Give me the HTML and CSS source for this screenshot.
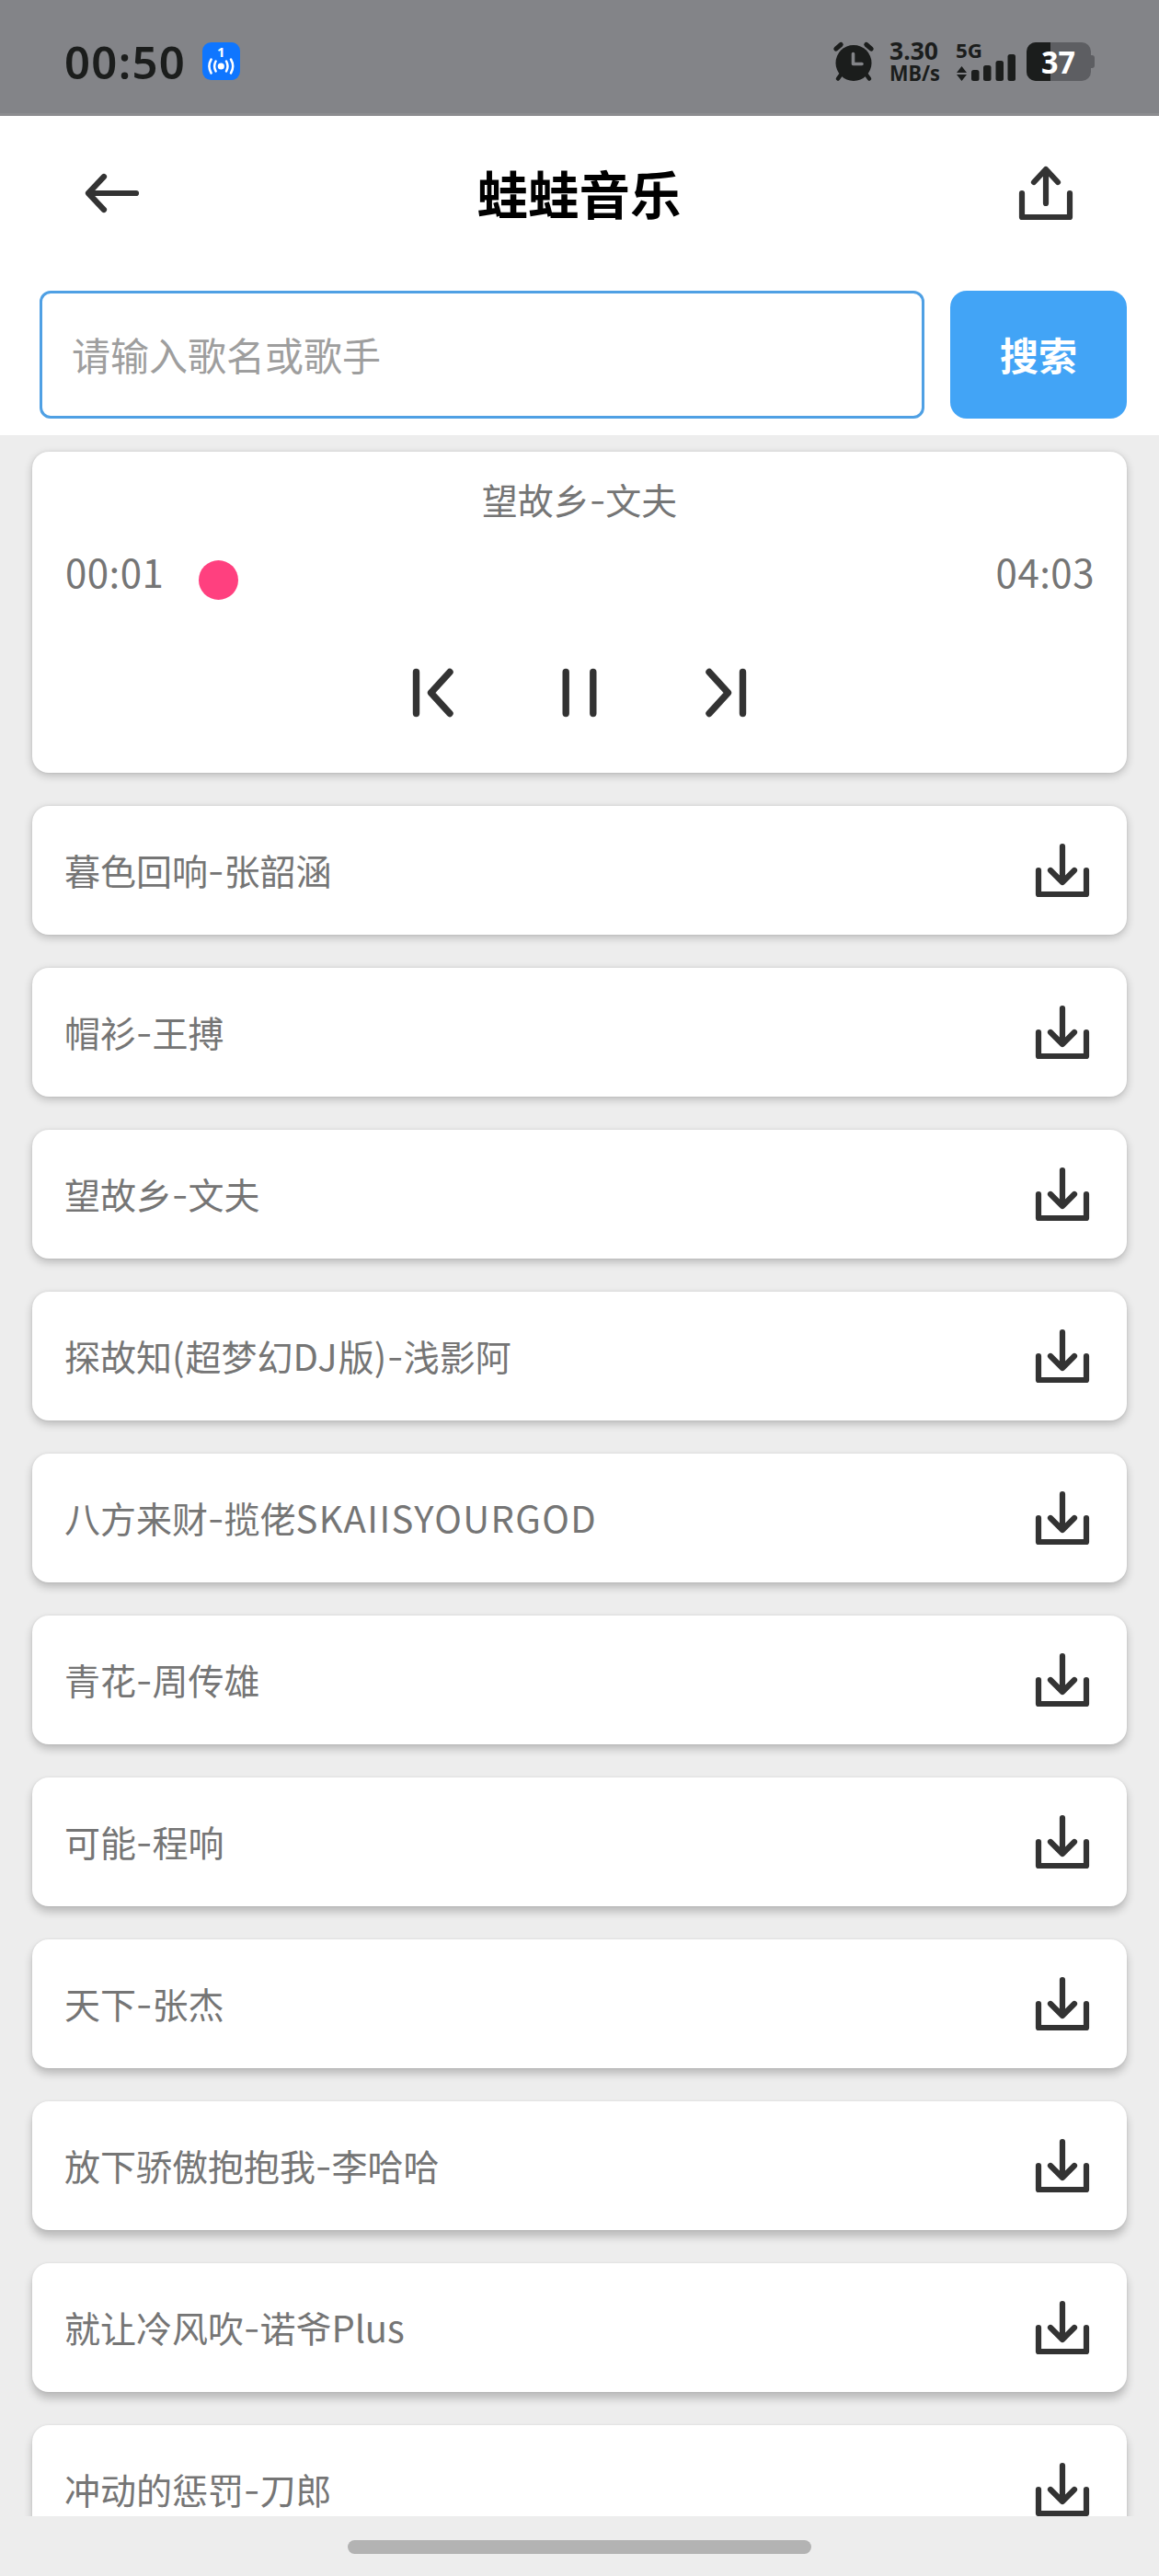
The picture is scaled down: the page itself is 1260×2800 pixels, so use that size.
FILE: index.html
```html
<!DOCTYPE html>
<html lang="zh-CN">
<head>
<meta charset="utf-8">
<title>蛙蛙音乐</title>
<link rel="stylesheet" href="styles.css">
</head>
<body>
<svg width="0" height="0" class="defs">
  <symbol id="download" viewBox="0 0 64 64">
    <path d="M32 6V44M19 32L32 45L45 32M6 32V58H58V32"/>
  </symbol>
</svg>
<div class="screen">
  <div class="status">
    <span class="clock">00:50</span>
    <svg class="hotspot" width="41" height="41" viewBox="0 0 41 41">
      <rect width="41" height="41" rx="9.5" fill="#0f76ff"/>
      <text x="20.3" y="16" text-anchor="middle" class="hotspot-num">1</text>
      <circle cx="20.3" cy="26" r="3.6" fill="#fff"/>
      <path d="M14.6 20.5Q11.6 26 14.6 31.5M9.6 18.5Q5.2 26 9.6 33.5M26 20.5Q29 26 26 31.5M31 18.5Q35.4 26 31 33.5" fill="none" stroke="#fff" stroke-width="2.5" stroke-linecap="round"/>
    </svg>
    <div class="status-right">
      <svg width="44" height="42" viewBox="0 0 44 42">
        <g stroke="#1b1d1c" stroke-width="5" stroke-linecap="round"><path d="M2.8 7.2L8.2 2.5M41.2 7.2L35.8 2.5"/><path d="M9 34L5 39.5M35 34L39 39.5" stroke-width="4.5"/></g>
        <circle cx="22" cy="22.4" r="19.5" fill="#1b1d1c"/>
        <path d="M21.5 12.5V23.5H31" fill="none" stroke="#838488" stroke-width="3.6" stroke-linecap="round" stroke-linejoin="round"/>
      </svg>
      <svg class="speed" width="56" height="46" viewBox="0 0 56 46">
        <text x="0" y="19" textLength="53" lengthAdjust="spacingAndGlyphs">3.30</text>
        <text x="0" y="42" font-size="22.5" textLength="55" lengthAdjust="spacingAndGlyphs">MB/s</text>
      </svg>
      <svg class="signal" width="65" height="42" viewBox="0 0 65 42">
        <text x="-1" y="16.500" textLength="29" lengthAdjust="spacingAndGlyphs">5G</text>
        <path d="M0 33H11L5.5 26ZM0 35H11L5.5 42Z"/>
        <rect x="16" y="30" width="8.5" height="12" rx="2.5"/>
        <rect x="29" y="25" width="8.5" height="17" rx="2.5"/>
        <rect x="42.5" y="20" width="8.5" height="22" rx="2.5"/>
        <rect x="55.5" y="13" width="8.5" height="29" rx="2.5"/>
      </svg>
      <svg class="battery" width="74" height="42" viewBox="0 0 74 42">
        <rect x="66" y="14" width="8" height="14" rx="3" fill="#5d5e62"/>
        <rect width="70" height="42" rx="10" fill="#5d5e62"/>
        <path d="M26 0H10A10 10 0 0 0 0 10V32A10 10 0 0 0 10 42H26Z" fill="#1b1d1c"/>
        <text x="16" y="33.5" textLength="37" lengthAdjust="spacingAndGlyphs">37</text>
      </svg>
    </div>
  </div>
  <header class="top">
    <div class="title-bar">
      <svg class="line" width="64" height="64" viewBox="0 0 64 64"><path d="M58 32H7M23 14L6 32L23 50"/></svg>
      <h1>蛙蛙音乐</h1>
      <svg class="line" width="64" height="64" viewBox="0 0 64 64"><path d="M32 43V7M19 20L32 6L45 20M6 32V58H58V32"/></svg>
    </div>
    <div class="search">
      <input class="field" type="text" placeholder="请输入歌名或歌手">
      <button class="go" type="button">搜索</button>
    </div>
  </header>
  <main class="list">
    <section class="card player">
      <div class="now">望故乡<i>-</i>文夫</div>
      <div class="progress"><span class="time">00:01</span><span class="thumb"></span><span class="time total">04:03</span></div>
      <div class="controls">
        <svg class="line" width="64" height="64" viewBox="0 0 64 64"><path d="M13.5 9.5V54.5M50 9.5L29.5 32L50 54.5"/></svg>
        <svg class="line" width="64" height="64" viewBox="0 0 64 64"><path d="M17.2 9.5V54.5M46.8 9.5V54.5"/></svg>
        <svg class="line" width="64" height="64" viewBox="0 0 64 64"><path d="M50.5 9.5V54.5M14 9.5L34.5 32L14 54.5"/></svg>
      </div>
    </section>
    <div class="card song"><span>暮色回响<i>-</i>张韶涵</span><svg class="line" width="64" height="64"><use href="#download"/></svg></div>
    <div class="card song"><span>帽衫<i>-</i>王搏</span><svg class="line" width="64" height="64"><use href="#download"/></svg></div>
    <div class="card song"><span>望故乡<i>-</i>文夫</span><svg class="line" width="64" height="64"><use href="#download"/></svg></div>
    <div class="card song"><span>探故知<b>(</b>超梦幻<b>DJ</b>版<b>)</b><i>-</i>浅影阿</span><svg class="line" width="64" height="64"><use href="#download"/></svg></div>
    <div class="card song"><span>八方来财<i>-</i>揽佬<b class="caps">SKAIISYOURGOD</b></span><svg class="line" width="64" height="64"><use href="#download"/></svg></div>
    <div class="card song"><span>青花<i>-</i>周传雄</span><svg class="line" width="64" height="64"><use href="#download"/></svg></div>
    <div class="card song"><span>可能<i>-</i>程响</span><svg class="line" width="64" height="64"><use href="#download"/></svg></div>
    <div class="card song"><span>天下<i>-</i>张杰</span><svg class="line" width="64" height="64"><use href="#download"/></svg></div>
    <div class="card song"><span>放下骄傲抱抱我<i>-</i>李哈哈</span><svg class="line" width="64" height="64"><use href="#download"/></svg></div>
    <div class="card song"><span>就让冷风吹<i>-</i>诺爷<b class="mixed">Plus</b></span><svg class="line" width="64" height="64"><use href="#download"/></svg></div>
    <div class="card song"><span>冲动的惩罚<i>-</i>刀郎</span><svg class="line" width="64" height="64"><use href="#download"/></svg></div>
  </main>
  <footer class="nav"><div class="handle"></div></footer>
</div>
</body>
</html>
```
FILE: styles.css
```css
* { box-sizing: border-box; }
body { margin: 0; background: #ededed; font-family: "Noto Sans CJK SC", "Noto Sans", sans-serif; }
.defs { display: none; }
.screen { width: 1260px; height: 2800px; display: flex; flex-direction: column; overflow: hidden; }
svg { display: block; flex: none; overflow: visible; }
.line { fill: none; stroke: #333; stroke-width: 6.2; stroke-linecap: round; stroke-linejoin: round; }

.status { height: 126px; flex: none; display: flex; align-items: flex-start; padding: 46px 70px 0; background: #838488; border-bottom: 3px solid #8c8c8f; color: #1b1d1c; font-family: "Noto Sans", sans-serif; }
.clock { width: 150px; height: 41px; line-height: 42px; font-size: 49px; font-weight: 600; letter-spacing: 1.3px; }
.hotspot-num { font: 700 15px "Noto Sans", sans-serif; fill: #fff; }
.status-right { margin-left: auto; display: flex; }
.speed { margin-left: 17px; font-size: 26px; font-weight: 700; fill: #1b1d1c; }
.signal { margin-left: 17px; font-size: 22px; font-weight: 700; fill: #1b1d1c; }
.battery { margin-left: 11px; font-size: 34px; font-weight: 700; fill: #fff; }

.top { height: 347px; flex: none; background: #fff; padding: 52px 35px 18px 43px; }
.title-bar { display: flex; align-items: center; justify-content: space-between; height: 64px; padding: 0 56px 0 47px; }
.title-bar h1 { margin: 0; font-size: 55.5px; line-height: 62px; padding-bottom: 2px; font-weight: 700; color: #000; }
.search { display: flex; gap: 28px; margin-top: 74px; height: 139px; }
.field { width: 962px; padding: 0 32px 2px; border: 3px solid #4fa0e4; border-radius: 12px; background: #fff; font: 400 42px "Noto Sans CJK SC", sans-serif; color: #333; }
.field::placeholder { color: #9e9e9e; opacity: 1; }
.go { flex: 1; border: 0; padding: 0 0 2px; border-radius: 18px; background: #42a4f6; color: #fff; font: 700 42px "Noto Sans CJK SC", sans-serif; }

.list { height: 2262px; flex: none; overflow: hidden; padding: 18px 35px 0; display: flex; flex-direction: column; gap: 36px; }
.card { --lift: 3px; flex: none; background: #fff; border-radius: 18px; color: #757575; font-size: 39px; box-shadow: 0 var(--lift) 10px rgba(0, 0, 0, .22), 0 0 3px rgba(0, 0, 0, .08); }
.card i { font-style: normal; display: inline-block; width: 17.5px; text-align: center; transform: translateY(-2px) scaleX(1.25); }
.card b { font-weight: 400; font-size: 40px; line-height: 1; letter-spacing: 1px; }
.card .caps { letter-spacing: 1.4px; }
.card .mixed { letter-spacing: -.2px; }
.player { height: 349px; padding: 24px 36px 0; }
.now { height: 54px; line-height: 54px; text-align: center; }
.progress { display: flex; align-items: center; height: 62px; margin-top: 23px; }
.time { width: 145px; font-size: 42px; line-height: 54px; letter-spacing: .5px; margin-top: -5px; }
.thumb { width: 43px; height: 43px; border-radius: 50%; background: #ff407f; margin-top: 14px; }
.total { margin-left: auto; margin-right: -1px; text-align: right; }
.controls { display: flex; justify-content: center; gap: 95px; margin-top: 67px; }
.controls .line { stroke-width: 7.4; }
.song { height: 140px; display: flex; align-items: center; justify-content: space-between; padding: 0 38px 0 35px; }
.song span { padding-bottom: 3px; }
.song:nth-child(n+4) { --lift: 4px; }
.song:nth-child(n+6) { --lift: 5px; }
.song:nth-child(n+8) { --lift: 6px; }
.song:nth-child(n+10) { --lift: 7px; }

.nav { flex: 1; display: flex; justify-content: center; padding-top: 26px; }
.handle { width: 504px; height: 15px; border-radius: 8px; background: #b3b3b3; }
```
